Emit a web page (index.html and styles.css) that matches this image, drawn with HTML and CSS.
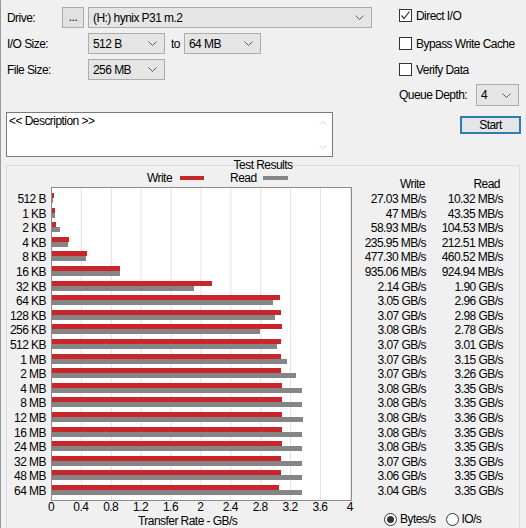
FILE: index.html
```html
<!DOCTYPE html>
<html>
<head>
<meta charset="utf-8">
<link rel="stylesheet" href="styles.css">
</head>
<body>
<div class="app">
  <div class="top">
    <div class="left">
      <div class="row">
        <span class="lbl lbl-drive">Drive:</span>
        <div class="btn-dots">...</div>
        <div class="combo w-drive"><span>(H:) hynix P31 m.2</span><svg viewBox="0 0 9 5"><polyline points="0.5,0.5 4.5,4.5 8.5,0.5"/></svg></div>
      </div>
      <div class="row">
        <span class="lbl lbl-wide">I/O Size:</span>
        <div class="combo w-small"><span>512 B</span><svg viewBox="0 0 9 5"><polyline points="0.5,0.5 4.5,4.5 8.5,0.5"/></svg></div>
        <span class="to">to</span>
        <div class="combo w-small"><span>64 MB</span><svg viewBox="0 0 9 5"><polyline points="0.5,0.5 4.5,4.5 8.5,0.5"/></svg></div>
      </div>
      <div class="row">
        <span class="lbl lbl-wide">File Size:</span>
        <div class="combo w-small"><span>256 MB</span><svg viewBox="0 0 9 5"><polyline points="0.5,0.5 4.5,4.5 8.5,0.5"/></svg></div>
      </div>
      <div class="desc">
        <div class="desc-text">&lt;&lt; Description &gt;&gt;</div>
        <div class="desc-scroll">
          <svg viewBox="0 0 9 5"><polyline points="0.5,4.5 4.5,0.5 8.5,4.5"/></svg>
          <svg viewBox="0 0 9 5"><polyline points="0.5,0.5 4.5,4.5 8.5,0.5"/></svg>
        </div>
      </div>
    </div>
    <div class="right">
      <div class="chk-row r1"><span class="chk"><svg viewBox="0 0 11 11"><polyline points="1.5,5.5 4,8.5 9.5,1.5"/></svg></span><span>Direct I/O</span></div>
      <div class="chk-row r2"><span class="chk"></span><span>Bypass Write Cache</span></div>
      <div class="chk-row r3"><span class="chk"></span><span>Verify Data</span></div>
      <div class="queue-row">
        <span class="queue-lbl">Queue Depth:</span>
        <div class="combo w-queue"><span>4</span><svg viewBox="0 0 9 5"><polyline points="0.5,0.5 4.5,4.5 8.5,0.5"/></svg></div>
      </div>
      <div class="start-row"><div class="start">Start</div></div>
    </div>
  </div>

  <div class="group">
    <div class="title">Test Results</div>
    <div class="group-body">
      <div class="chart-part">
        <div class="legend">
          <span>Write</span><span class="sw sw-w"></span>
          <span class="leg-read">Read</span><span class="sw sw-r"></span>
        </div>
        <div class="chart">
          <div class="ylabels">
            <div class="ylabel">512 B</div>
            <div class="ylabel">1 KB</div>
            <div class="ylabel">2 KB</div>
            <div class="ylabel">4 KB</div>
            <div class="ylabel">8 KB</div>
            <div class="ylabel">16 KB</div>
            <div class="ylabel">32 KB</div>
            <div class="ylabel">64 KB</div>
            <div class="ylabel">128 KB</div>
            <div class="ylabel">256 KB</div>
            <div class="ylabel">512 KB</div>
            <div class="ylabel">1 MB</div>
            <div class="ylabel">2 MB</div>
            <div class="ylabel">4 MB</div>
            <div class="ylabel">8 MB</div>
            <div class="ylabel">12 MB</div>
            <div class="ylabel">16 MB</div>
            <div class="ylabel">24 MB</div>
            <div class="ylabel">32 MB</div>
            <div class="ylabel">48 MB</div>
            <div class="ylabel">64 MB</div>
          </div>
          <div class="plot">
            <div class="bar-row"><div class="bw" style="width:0.66%"></div><div class="br" style="width:0.25%"></div></div>
            <div class="bar-row"><div class="bw" style="width:1.15%"></div><div class="br" style="width:1.06%"></div></div>
            <div class="bar-row"><div class="bw" style="width:1.44%"></div><div class="br" style="width:2.55%"></div></div>
            <div class="bar-row"><div class="bw" style="width:5.76%"></div><div class="br" style="width:5.19%"></div></div>
            <div class="bar-row"><div class="bw" style="width:11.65%"></div><div class="br" style="width:11.24%"></div></div>
            <div class="bar-row"><div class="bw" style="width:22.83%"></div><div class="br" style="width:22.58%"></div></div>
            <div class="bar-row"><div class="bw" style="width:53.5%"></div><div class="br" style="width:47.5%"></div></div>
            <div class="bar-row"><div class="bw" style="width:76.25%"></div><div class="br" style="width:74%"></div></div>
            <div class="bar-row"><div class="bw" style="width:76.75%"></div><div class="br" style="width:74.5%"></div></div>
            <div class="bar-row"><div class="bw" style="width:77%"></div><div class="br" style="width:69.5%"></div></div>
            <div class="bar-row"><div class="bw" style="width:76.75%"></div><div class="br" style="width:75.25%"></div></div>
            <div class="bar-row"><div class="bw" style="width:76.75%"></div><div class="br" style="width:78.75%"></div></div>
            <div class="bar-row"><div class="bw" style="width:76.75%"></div><div class="br" style="width:81.5%"></div></div>
            <div class="bar-row"><div class="bw" style="width:77%"></div><div class="br" style="width:83.75%"></div></div>
            <div class="bar-row"><div class="bw" style="width:77%"></div><div class="br" style="width:83.75%"></div></div>
            <div class="bar-row"><div class="bw" style="width:77%"></div><div class="br" style="width:84%"></div></div>
            <div class="bar-row"><div class="bw" style="width:77%"></div><div class="br" style="width:83.75%"></div></div>
            <div class="bar-row"><div class="bw" style="width:77%"></div><div class="br" style="width:83.75%"></div></div>
            <div class="bar-row"><div class="bw" style="width:76.75%"></div><div class="br" style="width:83.75%"></div></div>
            <div class="bar-row"><div class="bw" style="width:76.5%"></div><div class="br" style="width:83.75%"></div></div>
            <div class="bar-row"><div class="bw" style="width:76%"></div><div class="br" style="width:83.75%"></div></div>
          </div>
        </div>
        <div class="xticks">
          <span class="tick">0</span><span class="tick">0.4</span><span class="tick">0.8</span><span class="tick">1.2</span><span class="tick">1.6</span><span class="tick">2</span><span class="tick">2.4</span><span class="tick">2.8</span><span class="tick">3.2</span><span class="tick">3.6</span><span class="tick">4</span>
        </div>
        <div class="xtitle">Transfer Rate - GB/s</div>
      </div>
      <div class="values-part">
        <div class="vhead"><span class="vw hw">Write</span><span class="vr hr">Read</span></div>
        <div class="vrows">
          <div class="vrow"><span class="vw">27.03 MB/s</span><span class="vr">10.32 MB/s</span></div>
          <div class="vrow"><span class="vw">47 MB/s</span><span class="vr">43.35 MB/s</span></div>
          <div class="vrow"><span class="vw">58.93 MB/s</span><span class="vr">104.53 MB/s</span></div>
          <div class="vrow"><span class="vw">235.95 MB/s</span><span class="vr">212.51 MB/s</span></div>
          <div class="vrow"><span class="vw">477.30 MB/s</span><span class="vr">460.52 MB/s</span></div>
          <div class="vrow"><span class="vw">935.06 MB/s</span><span class="vr">924.94 MB/s</span></div>
          <div class="vrow"><span class="vw">2.14 GB/s</span><span class="vr">1.90 GB/s</span></div>
          <div class="vrow"><span class="vw">3.05 GB/s</span><span class="vr">2.96 GB/s</span></div>
          <div class="vrow"><span class="vw">3.07 GB/s</span><span class="vr">2.98 GB/s</span></div>
          <div class="vrow"><span class="vw">3.08 GB/s</span><span class="vr">2.78 GB/s</span></div>
          <div class="vrow"><span class="vw">3.07 GB/s</span><span class="vr">3.01 GB/s</span></div>
          <div class="vrow"><span class="vw">3.07 GB/s</span><span class="vr">3.15 GB/s</span></div>
          <div class="vrow"><span class="vw">3.07 GB/s</span><span class="vr">3.26 GB/s</span></div>
          <div class="vrow"><span class="vw">3.08 GB/s</span><span class="vr">3.35 GB/s</span></div>
          <div class="vrow"><span class="vw">3.08 GB/s</span><span class="vr">3.35 GB/s</span></div>
          <div class="vrow"><span class="vw">3.08 GB/s</span><span class="vr">3.36 GB/s</span></div>
          <div class="vrow"><span class="vw">3.08 GB/s</span><span class="vr">3.35 GB/s</span></div>
          <div class="vrow"><span class="vw">3.08 GB/s</span><span class="vr">3.35 GB/s</span></div>
          <div class="vrow"><span class="vw">3.07 GB/s</span><span class="vr">3.35 GB/s</span></div>
          <div class="vrow"><span class="vw">3.06 GB/s</span><span class="vr">3.35 GB/s</span></div>
          <div class="vrow"><span class="vw">3.04 GB/s</span><span class="vr">3.35 GB/s</span></div>
        </div>
        <div class="radios">
          <span class="radio on"></span><span class="rtext">Bytes/s</span>
          <span class="radio io"></span><span class="rtext">IO/s</span>
        </div>
      </div>
    </div>
  </div>
</div>
</body>
</html>
```
FILE: styles.css
```css
* { box-sizing: border-box; }
html, body { margin: 0; padding: 0; }
body {
  background: #f0f0f0;
  font-family: "Liberation Sans", Arial, sans-serif;
  font-size: 12px;
  letter-spacing: -0.55px;
  color: #000;
  width: 526px;
  height: 528px;
  overflow: hidden;
}
.app {
  width: 526px;
  height: 528px;
  border-left: 1px solid #9a9a9a;
  overflow: hidden;
}
.top { display: flex; padding: 7px 0 0 5px; }
.left { width: 366px; display: flex; flex-direction: column; gap: 5px; }
.row { display: flex; align-items: center; height: 21px; }
.lbl { padding-left: 1px; white-space: nowrap; }
.lbl-drive { width: 56px; }
.lbl-wide { width: 82px; }
.btn-dots {
  width: 22px; height: 21px; margin-right: 4px;
  border: 1px solid #adadad; background: #e1e1e1;
  display: flex; align-items: center; justify-content: center;
  line-height: 1; padding-bottom: 2px;
}
.combo {
  height: 21px;
  border: 1px solid #acacac;
  background: #e5e5e5;
  display: flex; align-items: center; justify-content: space-between;
  padding: 0 7px 0 4px;
  white-space: nowrap;
}
.combo svg { width: 9px; height: 5px; flex: none; }
.combo polyline, .desc-scroll polyline { fill: none; stroke: #5a5a5a; stroke-width: 1; }
.w-drive { width: 284px; }
.w-small { width: 77px; }
.w-queue { width: 43px; height: 22px; }
.to { width: 19px; padding-left: 6px; }
.desc {
  margin-top: 27px;
  width: 327px; height: 45px;
  border: 1px solid #7a7a7a;
  background: #fff;
  display: flex;
}
.desc-text { flex: 1; padding: 1px 0 0 2px; line-height: 15px; white-space: nowrap; }
.desc-scroll {
  width: 17px;
  display: flex; flex-direction: column; justify-content: space-between; align-items: center;
  padding: 8px 0 7px 0;
  margin-right: 1px;
}
.desc-scroll svg { width: 8px; height: 4px; }
.desc-scroll polyline { stroke: #c4c4c4; }
.right { width: 122px; margin-left: 27px; display: flex; flex-direction: column; }
.chk-row { display: flex; align-items: center; gap: 4px; height: 13px; white-space: nowrap; }
.r1 { margin-top: 2px; }
.r2 { margin-top: 15px; }
.r3 { margin-top: 13px; }
.chk {
  width: 13px; height: 13px; flex: none;
  border: 1px solid #333; background: #fff;
  display: flex; align-items: center; justify-content: center;
}
.chk svg { width: 11px; height: 11px; }
.chk polyline { fill: none; stroke: #333; stroke-width: 1.2; }
.queue-row { margin-top: 8px; height: 22px; display: flex; align-items: center; }
.queue-lbl { width: 77px; white-space: nowrap; }
.start-row { margin-top: 10px; display: flex; justify-content: flex-end; }
.start {
  width: 61px; height: 18px;
  border: 2px solid #2f7cae;
  background: #e3e5e8;
  display: flex; align-items: center; justify-content: center;
}
.group {
  margin: 8px 0 0 5px;
  width: 514px; height: 400px;
  border: 1px solid #dcdcdc;
  border-bottom: none;
}
.title { margin-top: -7px; height: 13px; line-height: 13px; text-align: center; white-space: nowrap; }
.group-body { display: flex; }
.chart-part { width: 345px; }
.legend { height: 12px; line-height: 12px; display: flex; align-items: center; padding-left: 140px; white-space: nowrap; }
.sw { display: inline-block; height: 4px; }
.sw-w { width: 24px; margin-left: 8px; background: #c8262b; }
.leg-read { margin-left: 26px; }
.sw-r { width: 25px; margin-left: 6px; background: #858585; }
.chart { display: flex; margin-top: 3px; }
.ylabels { width: 44px; padding: 5px 5px 0 0; }
.ylabel { height: 14.6px; line-height: 14.6px; text-align: right; white-space: nowrap; }
.plot {
  width: 301px;
  border: 1px solid #8c8c8c;
  padding: 5px 0 1px 0;
  background: #fff linear-gradient(to left, #e2e2e2 1px, transparent 1px) 0 0 / 10% 100%;
}
.bar-row { height: 14.6px; }
.bw { height: 5px; background: #c8262b; }
.br { height: 5px; background: #858585; }
.xticks { display: flex; margin: 0 0 0 29px; }
.tick { width: 29.9px; flex: none; text-align: center; line-height: 12px; white-space: nowrap; }
.xtitle { margin: 2px 0 0 131px; line-height: 12px; white-space: nowrap; }
.values-part { width: 160px; padding-top: 6px; }
.vhead { display: flex; height: 12px; line-height: 12px; }
.vrows { margin-top: 2px; }
.vrow { display: flex; height: 14.6px; line-height: 14.6px; }
.vw { width: 74px; text-align: right; white-space: nowrap; }
.vr { width: 77px; text-align: right; white-space: nowrap; }
.hw { padding-right: 1px; }
.hr { padding-right: 3px; }
.radios { margin-top: 14px; height: 14px; display: flex; align-items: center; padding-left: 32px; white-space: nowrap; }
.radio {
  width: 13px; height: 13px; flex: none;
  border: 1px solid #333; border-radius: 50%; background: #fff;
  display: flex; align-items: center; justify-content: center;
}
.radio.on::after { content: ""; width: 7px; height: 7px; border-radius: 50%; background: #333; }
.radio.io { margin-left: 10px; }
.rtext { margin-left: 3px; }
```
